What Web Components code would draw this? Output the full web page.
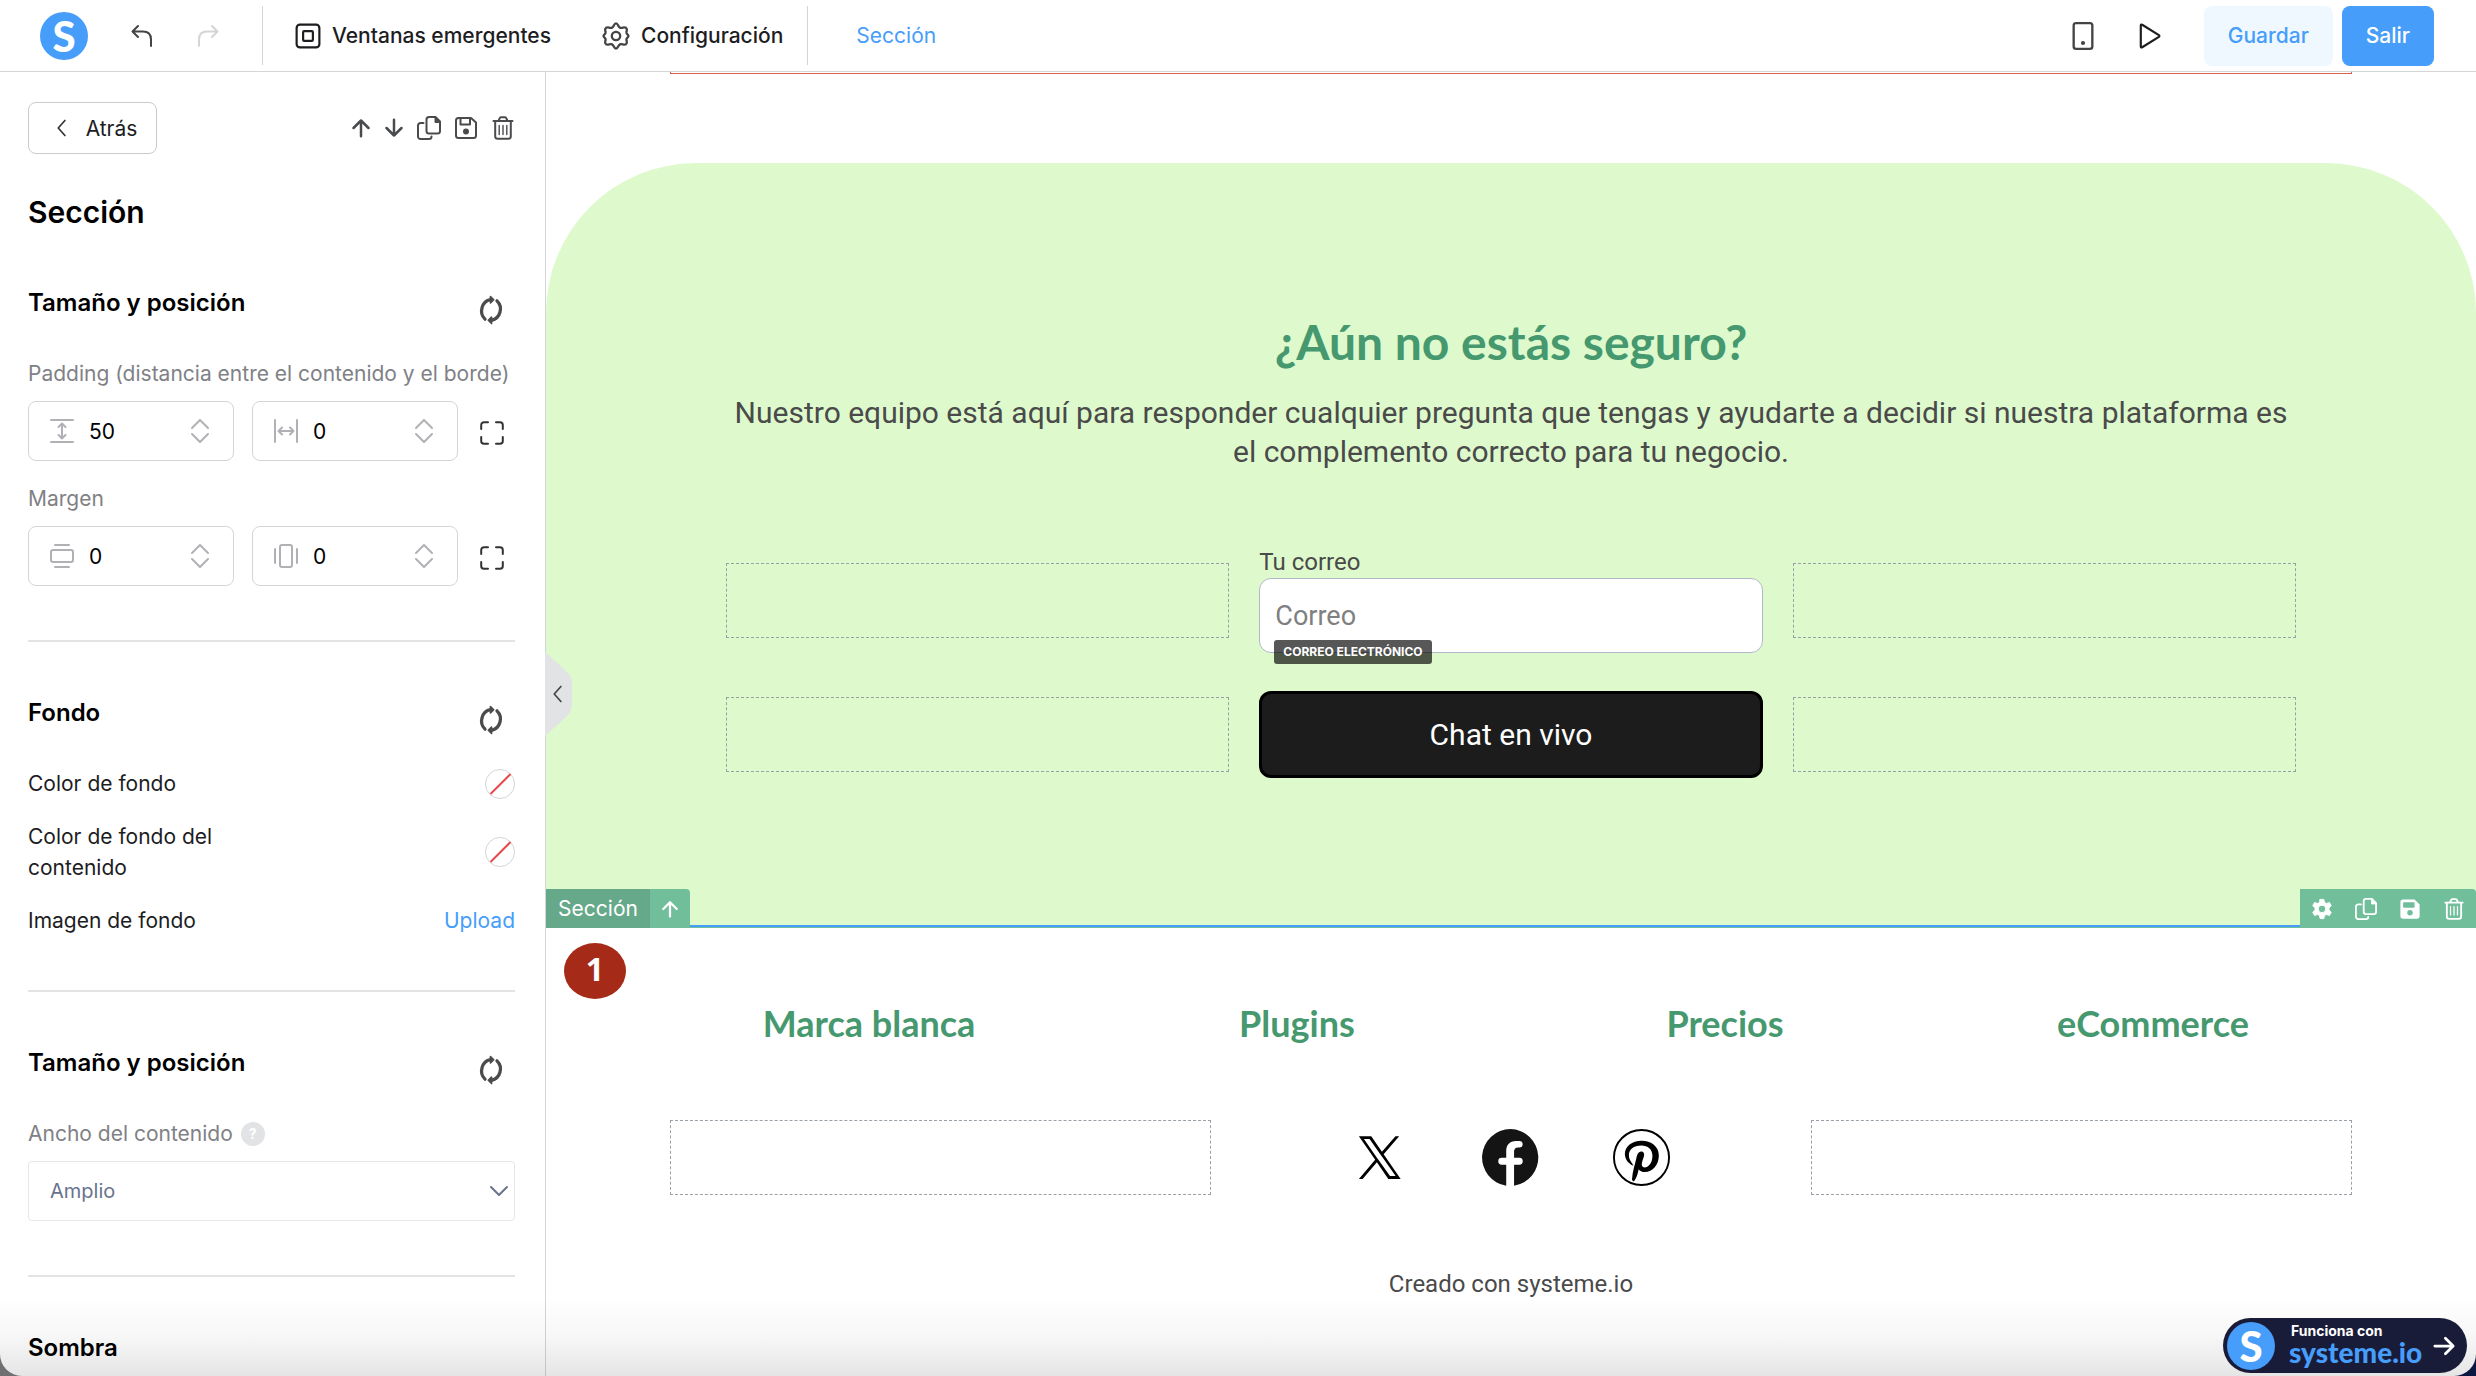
<!DOCTYPE html>
<html lang="es">
<head>
    <meta charset="UTF-8">
    <meta name="viewport" content="width=device-width, initial-scale=1.0">
    <title>Editor - Sección</title>
    <style>
        body {
            margin: 0;
            font-family: Inter, "Liberation Sans", sans-serif;
            color: #1d1d1f;
            background: linear-gradient(90deg, #6f6f72 50%, #0b1740 50%);
        }
    </style>
</head>
<body>

    <editor-app>
        <editor-topbar slot="topbar"></editor-topbar>

        <editor-sidebar slot="sidebar" heading="Sección">
            <settings-group heading="Tamaño y posición">
                <spacing-fields legend="Padding (distancia entre el contenido y el borde)">
                    <number-field icon="padY" value="50" label="Padding vertical"></number-field>
                    <number-field icon="padX" value="0" label="Padding horizontal"></number-field>
                </spacing-fields>
                <spacing-fields legend="Margen">
                    <number-field icon="marginY" value="0" label="Margen vertical"></number-field>
                    <number-field icon="marginX" value="0" label="Margen horizontal"></number-field>
                </spacing-fields>
            </settings-group>
            <settings-group heading="Fondo">
                <setting-row label="Color de fondo"><color-swatch label="Color de fondo"></color-swatch></setting-row>
                <setting-row label="Color de fondo del contenido"><color-swatch label="Color de fondo del contenido"></color-swatch></setting-row>
                <setting-row label="Imagen de fondo"><a href="#upload">Upload</a></setting-row>
            </settings-group>
            <settings-group heading="Tamaño y posición">
                <select-field label="Ancho del contenido" value="Amplio"></select-field>
            </settings-group>
            <settings-group heading="Sombra" fixed></settings-group>
        </editor-sidebar>

        <page-canvas slot="canvas">
            <contact-section>
                <span slot="title">¿Aún no estás seguro?</span>
                <span slot="text">Nuestro equipo está aquí para responder cualquier pregunta que tengas y ayudarte a decidir si nuestra plataforma es el complemento correcto para tu negocio.</span>
            </contact-section>
            <footer-section>
                <a slot="links" href="#marca">Marca blanca</a>
                <a slot="links" href="#plugins">Plugins</a>
                <a slot="links" href="#precios">Precios</a>
                <a slot="links" href="#ecommerce">eCommerce</a>
                <span slot="credit">Creado con systeme.io</span>
            </footer-section>
        </page-canvas>

        <powered-badge slot="badge"></powered-badge>
    </editor-app>

    <script>
        // 24x24 icons, drawn with the current colour
        const ICONS = {
            undo: '<path d="M8 2 2.500 7.500 8 13M3 7.500h10c5 0 8 3 8 8V22"/>',
            redo: '<path d="m16 2 5.500 5.500L16 13M21 7.500H11c-5 0-8 3-8 8V22"/>',
            popup: '<rect x="1.500" y="1.500" width="21" height="21" rx="3"/><rect x="7.500" y="7.500" width="9" height="9" rx="1"/>',
            gear: '<path d="M12 1.200c1.800 0 1.700 2.700 3.300 3.600 1.700.9 3.800-1 5.300.2 1.600 1.400.4 2.700.3 3.900-.2 1.600 1.800 1.700 1.800 3.100s-2 1.500-1.800 3.100c.1 1.200 1.300 2.500-.3 3.900-1.500 1.200-3.600-.7-5.300.2-1.600.9-1.500 3.600-3.300 3.600s-1.700-2.700-3.300-3.600c-1.700-.9-3.800 1-5.300-.2-1.600-1.400-.4-2.700-.3-3.900.2-1.600-1.800-1.700-1.800-3.100s2-1.500 1.800-3.100C3 7.700 1.800 6.400 3.400 5c1.500-1.200 3.600.7 5.300-.2C10.300 3.900 10.200 1.200 12 1.200z"/><circle cx="12" cy="12" r="3.600"/>',
            gearSolid: '<path fill="currentColor" stroke-width="1" fill-rule="evenodd" d="M10 1.500h4l.8 3.300 2 1.200 3.300-1.100 2 3.500-2.500 2.400v2.400l2.500 2.400-2 3.500-3.300-1.100-2 1.200-.8 3.300h-4l-.8-3.300-2-1.200-3.300 1.100-2-3.500 2.500-2.400v-2.400L1.900 8.400l2-3.500L7.200 6l2-1.200zM12 8a4 4 0 1 0 0 8 4 4 0 0 0 0-8z"/>',
            phone: '<rect x="4" y="1" width="16" height="22" rx="2"/><circle cx="12" cy="18" r=".8" fill="currentColor"/>',
            play: '<path d="M3.500 2.200v19.600c0 .8.700 1 1.300.6l15.400-9.600c.6-.4.6-1.200 0-1.600L4.800 1.600c-.6-.4-1.300-.2-1.300.6z"/>',
            left: '<path d="m15.500 3-8 9 8 9"/>',
            down: '<path d="m4 8 8 8 8-8"/>',
            arrowUp: '<path d="M12 22V3M3 12l9-9 9 9"/>',
            arrowDown: '<path d="M12 2v19M3 12l9 9 9-9"/>',
            arrowRight: '<path d="M2 12h19M13.500 3.500 22 12l-8.500 8.500"/>',
            copy: '<path d="M12 1h6.500L23 5.500V15a2.500 2.500 0 0 1-2.500 2.500H12A2.500 2.500 0 0 1 9.500 15V3.500A2.500 2.500 0 0 1 12 1zM6.500 7H3.500A2.500 2.500 0 0 0 1 9.500V20.500A2.500 2.500 0 0 0 3.500 23H12a2.500 2.500 0 0 0 2.500-2.500"/><path fill="currentColor" stroke-width="1" d="M18 1v5.500h5z"/>',
            save: '<path d="M4.500 2H17l5 4.500v13a2.500 2.500 0 0 1-2.500 2.500h-15A2.500 2.500 0 0 1 2 19.500v-15A2.500 2.500 0 0 1 4.500 2z"/><path d="M6.500 2v6.500H16V2"/><circle cx="12" cy="15.500" r="2" fill="currentColor"/>',
            saveSolid: '<path fill="currentColor" stroke="none" fill-rule="evenodd" d="M4.500 1.500H17L22.500 7v12.500a3 3 0 0 1-3 3h-15a3 3 0 0 1-3-3v-15a3 3 0 0 1 3-3zM5.500 4.500a1 1 0 0 0-1 1v4a1 1 0 0 0 1 1H16a1 1 0 0 0 1-1v-4a1 1 0 0 0-1-1zM12 13a3 3 0 1 0 0 6 3 3 0 0 0 0-6z"/>',
            trash: '<path d="M2.500 5h19M7.500 5l1.200-2.800A1.500 1.500 0 0 1 10 1.200h4a1.500 1.500 0 0 1 1.300 1L16.500 5M4.200 5v15.300a2.500 2.500 0 0 0 2.500 2.500h10.600a2.500 2.500 0 0 0 2.500-2.500V5"/><path stroke-width="1.400" d="M8.200 9.500v9M12 9.500v9M15.800 9.500v9"/>',
            refresh: '<path d="M6.500 20.500A10 10.500 0 0 1 11.500 2.500M17.500 3.500a10 10.500 0 0 1-5 18"/><path fill="currentColor" stroke-width="1.500" d="m11.500-.5 3 3-3 3zM12.500 18.500l-3 3 3 3z"/>',
            expand: '<path d="M8 1.200H4A2.800 2.800 0 0 0 1.200 4v4M16 1.200h4A2.800 2.800 0 0 1 22.800 4v4M8 22.800H4A2.800 2.800 0 0 1 1.200 20v-4M16 22.800h4a2.800 2.800 0 0 0 2.800-2.800v-4"/>',
            padY: '<path d="M1 1h22M1 23h22M12 5v14M8.500 8 12 4.500 15.500 8M8.500 16l3.500 3.500 3.500-3.500"/>',
            padX: '<path d="M1 1v22M23 1v22M5 12h14M8 8.500 4.500 12 8 15.500M16 8.500l3.500 3.500-3.500 3.500"/>',
            marginY: '<rect x="1" y="6" width="22" height="12" rx="2"/><path d="M5 1h14M5 23h14"/>',
            marginX: '<rect x="6" y="1" width="12" height="22" rx="2"/><path d="M1 5v14M23 5v14"/>',
            stepper: '<path d="m4 9 8-8 8 8M4 15l8 8 8-8"/>',
            x: '<path fill="currentColor" stroke="none" d="M14.200 10.200 22.500.6h-2l-7.200 8.300L7.600.6H1l8.700 12.600L1 23.400h2l7.600-8.900 6.100 8.900h6.600zM11.500 13.300l-.9-1.200L3.700 2.100h3l5.700 8.100.9 1.200 7.300 10.500h-3z"/>',
            facebook: '<path fill="currentColor" stroke="none" d="M12 0a12 12 0 0 0-1.800 23.860V15H8.300a1.450 1.450 0 0 1 0-2.900h1.900V9.200c0-2.600 1.600-4.200 4-4.200h1.500a1.400 1.400 0 0 1 0 2.800h-.5c-1.200 0-1.700.7-1.700 1.700v2.600h2.200a1.450 1.450 0 0 1 0 2.900h-2.200v8.860A12 12 0 0 0 12 0z"/>',
            pinterest: '<circle cx="12" cy="12" r="11.600" stroke-width=".8"/><path fill="currentColor" stroke="none" d="M8.600 15.500C6.500 14.600 5 12.800 5 10.400 5 7.300 8 4.900 12 4.900c4.200 0 7.300 2.500 7.300 6.100 0 4-2.600 7.100-5.900 7.100-1.200 0-2.100-.5-2.600-1.200-.3 1.800-.9 3.700-2 5.200-.5-.2-.8-.5-.8-.9.200-3.500 1.300-6.400 1.800-8.800.3-1.300.8-2.900 2.100-2.900 1.100 0 1.400 1 1.100 2.100-.4 1.500-1.400 3.400-.5 4.300 1.100 1 4.100-.4 4.100-4.600 0-2.900-1.900-4.400-4.700-4.400-3.200 0-5.200 1.700-5.200 4 0 2.200 1.300 3 1.900 4.600z"/>'
        };

        // Base class: puts the markup and the styles in an open shadow root
        class BaseElement extends HTMLElement {
            connectedCallback() {
                if (this.shadowRoot) return;
                const root = this.attachShadow({ mode: 'open' });
                root.innerHTML = `<style>
                    :host, *, *::before, *::after { box-sizing: border-box; }
                    h1, h2, p, fieldset, legend { margin: 0; padding: 0; border: 0; min-width: 0; }
                    button { font: inherit; color: inherit; background: none; border: 0; padding: 0; display: flex; align-items: center; justify-content: center; cursor: pointer; }
                    ${this.styles()}
                </style>${this.render()}`;
            }
            styles() { return ''; }
            render() { return '<slot></slot>'; }
            attr(name) { return this.getAttribute(name) || ''; }
        }

        class UiIcon extends BaseElement {
            styles() {
                return `
                    :host { display: block; flex: none; width: var(--size, 24px); height: var(--size, 24px); }
                    svg { display: block; width: 100%; height: 100%; overflow: visible; }`;
            }
            render() {
                return `<svg viewBox="0 0 24 24" fill="none" stroke="currentColor" stroke-width="${this.attr('weight') || 2}" stroke-linecap="round" stroke-linejoin="round" aria-hidden="true">${ICONS[this.attr('name')]}</svg>`;
            }
        }
        customElements.define('ui-icon', UiIcon);

        class EditorApp extends BaseElement {
            styles() {
                return `
                    :host {
                        display: grid;
                        grid-template: auto 1fr / 546px 1fr;
                        height: 100vh;
                        position: relative;
                        overflow: hidden;
                        background: #fff;
                        border-radius: 0 0 22px 22px;
                    }
                    .top { grid-column: 1 / 3; }
                    .side, .main { min-height: 0; min-width: 0; overflow: hidden; }
                    .side { border-right: 1px solid #d4d5d6; }
                    /* shade at the lower edge of the window */
                    .shade {
                        position: absolute;
                        inset: auto 0 0 0;
                        height: 80px;
                        background: linear-gradient(rgba(0, 0, 0, 0), rgba(0, 0, 0, .03) 50%, rgba(0, 0, 0, .1));
                        pointer-events: none;
                    }
                    .handle {
                        position: absolute;
                        left: 545px;
                        top: 652px;
                        width: 28px;
                        height: 84px;
                        padding-right: 3px;
                        color: #444;
                    }
                    .handle svg { position: absolute; inset: 0; }
                    .handle ui-icon { --size: 20px; position: relative; }
                    .badge { position: absolute; right: 9px; bottom: 3px; }`;
            }
            render() {
                return `
                    <div class="top"><slot name="topbar"></slot></div>
                    <div class="side"><slot name="sidebar"></slot></div>
                    <div class="main"><slot name="canvas"></slot></div>
                    <button class="handle" aria-label="Ocultar panel">
                        <svg viewBox="0 0 28 84" aria-hidden="true"><path fill="#e2e3e5" d="M0 0l20 18q7 6 7 13v22q0 7-7 13L0 84z"/></svg>
                        <ui-icon name="left"></ui-icon>
                    </button>
                    <div class="shade"></div>
                    <div class="badge"><slot name="badge"></slot></div>`;
            }
        }
        customElements.define('editor-app', EditorApp);

        class BrandLogo extends BaseElement {
            styles() {
                return `
                    :host {
                        display: grid;
                        place-items: center;
                        flex: none;
                        width: 48px;
                        height: 48px;
                        border-radius: 50%;
                        background: #469dfa;
                        color: #fff;
                        font: 900 42px/48px Lato, sans-serif;
                    }`;
            }
            render() { return '<span>S</span>'; }
        }
        customElements.define('brand-logo', BrandLogo);

        class EditorTopbar extends BaseElement {
            styles() {
                return `
                    :host {
                        display: flex;
                        align-items: center;
                        height: 72px;
                        border-bottom: 1px solid #d4d5d6;
                        padding: 0 42px 0 40px;
                        font-size: 21px;
                        line-height: 30px;
                    }
                    .history { display: flex; gap: 42px; margin: 0 42px; color: #444; }
                    .off { color: #d4d5d6; }
                    .menu {
                        display: flex;
                        align-self: stretch;
                        align-items: center;
                        gap: 51px;
                        margin: 6px 0;
                        padding: 0 24px 0 32px;
                        border: solid #d4d5d6;
                        border-width: 0 1px;
                        font-weight: 500;
                    }
                    .menu button { gap: 11px; }
                    .menu ui-icon { --size: 26px; }
                    .menu .gear { --size: 28px; color: #444; }
                    .tab { color: #469dfa; text-decoration: none; margin-left: 48px; }
                    .tools { display: flex; gap: 40px; margin: 0 41px 0 auto; }
                    .tools ui-icon { --size: 26px; }
                    .tools .phone { --size: 28px; color: #444; }
                    .actions { display: flex; gap: 9px; font-weight: 500; }
                    .actions button { height: 60px; padding: 0 24px; border-radius: 8px; }
                    .save { background: #f0f8ff; color: #469dfa; }
                    .exit { background: #469dfa; color: #fff; }`;
            }
            render() {
                return `
                    <brand-logo></brand-logo>
                    <div class="history">
                        <button aria-label="Deshacer"><ui-icon name="undo"></ui-icon></button>
                        <button class="off" aria-label="Rehacer" disabled><ui-icon name="redo"></ui-icon></button>
                    </div>
                    <nav class="menu">
                        <button><ui-icon name="popup"></ui-icon>Ventanas emergentes</button>
                        <button><ui-icon class="gear" name="gear"></ui-icon>Configuración</button>
                    </nav>
                    <a class="tab" href="#seccion">Sección</a>
                    <div class="tools">
                        <button aria-label="Vista móvil"><ui-icon class="phone" name="phone"></ui-icon></button>
                        <button aria-label="Vista previa"><ui-icon name="play"></ui-icon></button>
                    </div>
                    <div class="actions">
                        <button class="save">Guardar</button>
                        <button class="exit">Salir</button>
                    </div>`;
            }
        }
        customElements.define('editor-topbar', EditorTopbar);

        class EditorSidebar extends BaseElement {
            styles() {
                return `
                    :host { display: block; padding: 30px 30px 0 28px; font-size: 21px; line-height: 31px; }
                    .bar { display: flex; justify-content: space-between; align-items: center; }
                    .back { gap: 14px; width: 129px; height: 52px; padding-left: 4px; border: 1px solid #c9cacc; border-radius: 8px; }
                    .back ui-icon { --size: 20px; color: #333; }
                    .tools { display: flex; align-items: center; gap: 13px; color: #4a4b4d; }
                    .tools .arrow { --size: 20px; }
                    h1 { margin-top: 38px; font-size: 30px; line-height: 40px; font-weight: 600; color: #000; }`;
            }
            render() {
                return `
                    <div class="bar">
                        <button class="back"><ui-icon name="left"></ui-icon>Atrás</button>
                        <div class="tools">
                            <button aria-label="Subir"><ui-icon class="arrow" name="arrowUp" weight="3"></ui-icon></button>
                            <button aria-label="Bajar"><ui-icon class="arrow" name="arrowDown" weight="3"></ui-icon></button>
                            <button aria-label="Duplicar"><ui-icon name="copy"></ui-icon></button>
                            <button aria-label="Guardar bloque"><ui-icon name="save"></ui-icon></button>
                            <button aria-label="Eliminar"><ui-icon name="trash"></ui-icon></button>
                        </div>
                    </div>
                    <h1>${this.attr('heading')}</h1>
                    <slot></slot>`;
            }
        }
        customElements.define('editor-sidebar', EditorSidebar);

        class SettingsGroup extends BaseElement {
            styles() {
                return `
                    :host { display: block; padding: 56px 0 54px; border-bottom: 2px solid #e2e3e5; }
                    .head { display: flex; justify-content: space-between; align-items: center; padding-right: 11px; height: 30px; margin-bottom: 40px; }
                    h2 { font-size: 24px; line-height: 30px; font-weight: 600; color: #000; }
                    button { color: #4a4b4d; margin-top: 14px; }
                    ui-icon { --size: 26px; }
                    .body { display: grid; gap: 22px; }`;
            }
            render() {
                const reset = this.hasAttribute('fixed') ? '' : '<button aria-label="Restablecer"><ui-icon name="refresh" weight="3"></ui-icon></button>';
                return `
                    <div class="head"><h2>${this.attr('heading')}</h2>${reset}</div>
                    <div class="body"><slot></slot></div>`;
            }
        }
        customElements.define('settings-group', SettingsGroup);

        class SpacingFields extends BaseElement {
            styles() {
                return `
                    :host { display: block; min-width: 0; }
                    legend { color: #808186; margin-bottom: 12px; white-space: nowrap; }
                    .row { display: grid; grid-template-columns: minmax(0, 1fr) 24px; gap: 22px; align-items: center; padding-right: 11px; }
                    .fields { display: grid; grid-template-columns: repeat(2, minmax(0, 1fr)); gap: 18px; }
                    button { color: #333; padding-top: 4px; }`;
            }
            render() {
                return `
                    <fieldset>
                        <legend>${this.attr('legend')}</legend>
                        <div class="row">
                            <div class="fields"><slot></slot></div>
                            <button aria-label="Editar cada lado"><ui-icon name="expand"></ui-icon></button>
                        </div>
                    </fieldset>`;
            }
        }
        customElements.define('spacing-fields', SpacingFields);

        class NumberField extends BaseElement {
            styles() {
                return `
                    :host { display: block; }
                    label {
                        display: flex;
                        align-items: center;
                        gap: 15px;
                        height: 60px;
                        padding: 0 21px;
                        border: 1px solid #d4d5d6;
                        border-radius: 8px;
                        color: #b0b1b5;
                    }
                    input {
                        flex: 1;
                        min-width: 0;
                        padding: 0;
                        border: 0;
                        outline: 0;
                        background: none;
                        font: inherit;
                        color: #000;
                    }`;
            }
            render() {
                return `
                    <label>
                        <ui-icon name="${this.attr('icon')}"></ui-icon>
                        <input type="text" inputmode="numeric" value="${this.attr('value')}" aria-label="${this.attr('label')}">
                        <ui-icon name="stepper"></ui-icon>
                    </label>`;
            }
        }
        customElements.define('number-field', NumberField);

        class SettingRow extends BaseElement {
            styles() {
                return `
                    :host { display: flex; justify-content: space-between; align-items: center; }
                    span { max-width: 240px; }
                    ::slotted(a) { color: #469dfa; text-decoration: none; }`;
            }
            render() { return `<span>${this.attr('label')}</span><slot></slot>`; }
        }
        customElements.define('setting-row', SettingRow);

        class ColorSwatch extends BaseElement {
            styles() {
                return `
                    :host { display: block; }
                    button { width: 30px; height: 30px; border: 1px solid #d4d5d6; border-radius: 50%; background: #fff; }
                    svg { flex: none; width: 28px; height: 28px; }`;
            }
            render() {
                return `<button aria-label="${this.attr('label')}"><svg viewBox="0 0 28 28" aria-hidden="true"><path d="M4.500 24 24.500 4" stroke="#e5484d" stroke-width="2"/></svg></button>`;
            }
        }
        customElements.define('color-swatch', ColorSwatch);

        class SelectField extends BaseElement {
            styles() {
                return `
                    :host { display: block; }
                    .label { display: flex; align-items: center; gap: 8px; margin-bottom: 12px; color: #808186; }
                    .help { width: 24px; height: 24px; border-radius: 50%; background: #e2e3e5; color: #fff; font-size: 14px; font-weight: 700; line-height: 24px; text-align: center; }
                    .box { display: grid; align-items: center; color: #68738d; }
                    .box > * { grid-area: 1 / 1; }
                    select {
                        appearance: none;
                        width: 100%;
                        height: 60px;
                        padding: 0 21px;
                        border: 1px solid #e6e7e8;
                        border-radius: 4px;
                        background: #fff;
                        font: inherit;
                        font-size: 20px;
                        color: inherit;
                    }
                    ui-icon { --size: 24px; justify-self: end; margin-right: 4px; pointer-events: none; }`;
            }
            render() {
                return `
                    <div class="label"><label for="value">${this.attr('label')}</label><span class="help">?</span></div>
                    <div class="box">
                        <select id="value"><option>${this.attr('value')}</option></select>
                        <ui-icon name="down"></ui-icon>
                    </div>`;
            }
        }
        customElements.define('select-field', SelectField);

        class PageCanvas extends BaseElement {
            styles() {
                return `
                    :host { display: block; font-family: Roboto, "Liberation Sans", sans-serif; color: #4a4a4a; }
                    /* lower edge of the block scrolled out above */
                    .above { height: 2px; margin: 0 124px 89px; border: solid #d9604f; border-width: 0 1px 1px; }`;
            }
            render() { return '<div class="above"></div><slot></slot>'; }
        }
        customElements.define('page-canvas', PageCanvas);

        class DropZone extends BaseElement {
            styles() { return ':host { display: block; height: 75px; border: 1px dashed #9aa0a8; }'; }
            render() { return ''; }
        }
        customElements.define('drop-zone', DropZone);

        class ContactSection extends BaseElement {
            styles() {
                return `
                    :host {
                        display: block;
                        position: relative;
                        padding: 150px 180px;
                        border-radius: 150px 150px 0 0;
                        background: #defacd;
                        text-align: center;
                    }
                    h2 { font: 700 48px/58px Lato, sans-serif; color: #46986f; }
                    p { margin-top: 22px; font-size: 30px; line-height: 39px; }
                    form { display: grid; grid-template-columns: repeat(3, 1fr); align-items: center; gap: 38px 30px; margin-top: 76px; }
                    .field { position: relative; text-align: left; }
                    label { display: block; font-size: 24px; line-height: 31px; }
                    input {
                        display: block;
                        width: 100%;
                        height: 75px;
                        padding: 0 15px;
                        border: 1px solid #b1b8c8;
                        border-radius: 12px;
                        background: #fff;
                        font: inherit;
                        font-size: 27px;
                    }
                    input::placeholder { color: #808080; opacity: 1; }
                    .tag {
                        position: absolute;
                        left: 15px;
                        bottom: -11px;
                        padding: 0 9px;
                        border-radius: 3px;
                        background: rgba(0, 0, 0, .66);
                        color: #fff;
                        font: 700 12px/24px Inter, sans-serif;
                        white-space: nowrap;
                    }
                    .chat { height: 87px; border: 3px solid #000; border-radius: 12px; background: #1c1c1c; color: #fff; font-size: 30px; }
                    /* outline and tools of the selected block */
                    .line { position: absolute; inset: auto 0 0 0; height: 3px; background: linear-gradient(#469dfa 2px, #71be9b 2px); }
                    .tools {
                        position: absolute;
                        bottom: 0;
                        display: flex;
                        height: 39px;
                        background: #71be9b;
                        color: #fff;
                        border-top-right-radius: 4px;
                        overflow: hidden;
                        font: 21px/39px Inter, sans-serif;
                    }
                    .tools.name { left: 0; }
                    .tools.name span { width: 104px; background: #66a98a; }
                    .tools.name button { width: 40px; --size: 18px; }
                    .tools.acts { right: 0; gap: 22px; padding: 0 11px; --size: 22px; }`;
            }
            render() {
                return `
                    <h2><slot name="title"></slot></h2>
                    <p><slot name="text"></slot></p>
                    <form>
                        <drop-zone></drop-zone>
                        <div class="field">
                            <label for="mail">Tu correo</label>
                            <input id="mail" type="email" placeholder="Correo">
                            <span class="tag">CORREO ELECTRÓNICO</span>
                        </div>
                        <drop-zone></drop-zone>
                        <drop-zone></drop-zone>
                        <button class="chat" type="button">Chat en vivo</button>
                        <drop-zone></drop-zone>
                    </form>
                    <div class="line"></div>
                    <div class="tools name"><span>Sección</span><button aria-label="Subir sección"><ui-icon name="arrowUp" weight="3"></ui-icon></button></div>
                    <div class="tools acts">
                        <button aria-label="Ajustes"><ui-icon name="gearSolid"></ui-icon></button>
                        <button aria-label="Duplicar"><ui-icon name="copy"></ui-icon></button>
                        <button aria-label="Guardar"><ui-icon name="saveSolid"></ui-icon></button>
                        <button aria-label="Eliminar"><ui-icon name="trash"></ui-icon></button>
                    </div>`;
            }
        }
        customElements.define('contact-section', ContactSection);

        class FooterSection extends BaseElement {
            styles() {
                return `
                    :host { display: block; position: relative; padding: 73px 124px; text-align: center; }
                    .step {
                        position: absolute;
                        left: 18px;
                        top: 15px;
                        width: 62px;
                        height: 56px;
                        border-radius: 50%;
                        background: #a52b18;
                        color: #fff;
                        font: 700 32px/52px "Noto Sans", sans-serif;
                    }
                    .links { display: grid; grid-template-columns: repeat(4, 1fr); gap: 30px; }
                    ::slotted(a) { font: 700 36px/44px Lato, sans-serif; color: #46986f; text-decoration: none; }
                    .row { display: grid; grid-template-columns: repeat(3, 1fr); gap: 30px; align-items: center; margin: 75px 0 74px; }
                    .social { display: flex; justify-content: center; align-items: center; gap: 74px; }
                    .social a { color: #000; }
                    .social ui-icon { --size: 57px; }
                    .social .x { --size: 45px; margin: 0 6px; }
                    .social .fb { color: #141414; }
                    p { font-size: 24px; line-height: 30px; }`;
            }
            render() {
                return `
                    <span class="step">1</span>
                    <nav class="links"><slot name="links"></slot></nav>
                    <div class="row">
                        <drop-zone></drop-zone>
                        <div class="social">
                            <a href="#x" aria-label="X"><ui-icon class="x" name="x"></ui-icon></a>
                            <a href="#facebook" aria-label="Facebook"><ui-icon class="fb" name="facebook"></ui-icon></a>
                            <a href="#pinterest" aria-label="Pinterest"><ui-icon name="pinterest"></ui-icon></a>
                        </div>
                        <drop-zone></drop-zone>
                    </div>
                    <p><slot name="credit"></slot></p>`;
            }
        }
        customElements.define('footer-section', FooterSection);

        class PoweredBadge extends BaseElement {
            styles() {
                return `
                    :host { display: block; }
                    a {
                        display: flex;
                        align-items: center;
                        width: 244px;
                        height: 55px;
                        padding: 0 12px 0 4px;
                        border-radius: 28px;
                        background: #191c38;
                        color: #fff;
                        text-decoration: none;
                    }
                    .text { display: grid; margin: 0 auto 0 14px; padding-bottom: 4px; }
                    .by { font-size: 14px; line-height: 16px; font-weight: 700; padding-left: 2px; }
                    .brand { font: 900 28px/26px Lato, sans-serif; color: #469dfa; }
                    ui-icon { --size: 22px; }`;
            }
            render() {
                return `
                    <a href="#systeme">
                        <brand-logo></brand-logo>
                        <span class="text"><span class="by">Funciona con</span><span class="brand">systeme.io</span></span>
                        <ui-icon name="arrowRight" weight="3"></ui-icon>
                    </a>`;
            }
        }
        customElements.define('powered-badge', PoweredBadge);
    </script>

</body>
</html>
